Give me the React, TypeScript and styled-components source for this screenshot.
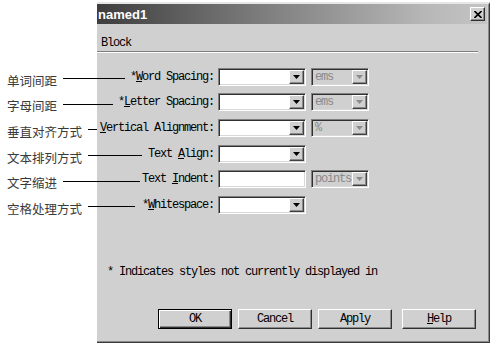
import styled, { createGlobalStyle } from 'styled-components';

const GlobalStyle = createGlobalStyle`
    html, body {
        margin: 0;
        padding: 0;
        background: #ffffff;
    }
    body {
        width: 497px;
        height: 347px;
        overflow: hidden;
    }
`

const mono = `"Liberation Mono", "DejaVu Sans Mono", monospace`;

interface FieldRow {
    label: string;
    key: string;
    star: boolean;
    kind: 'select' | 'input';
    unit?: string;
}

const rows: FieldRow[] = [
    { label: 'ord Spacing:', key: 'W', star: true, kind: 'select', unit: 'ems' },
    { label: 'etter Spacing:', key: 'L', star: true, kind: 'select', unit: 'ems' },
    { label: 'ertical Alignment:', key: 'V', star: false, kind: 'select', unit: '%' },
    { label: 'Text |lign:', key: 'A', star: false, kind: 'select' },
    { label: 'Text |ndent:', key: 'I', star: false, kind: 'input', unit: 'points' },
    { label: 'hitespace:', key: 'W', star: true, kind: 'select' },
];

const callouts = [
    { text: '单词间距', reach: 118 },
    { text: '字母间距', reach: 106 },
    { text: '垂直对齐方式', reach: 90 },
    { text: '文本排列方式', reach: 135 },
    { text: '文字缩进', reach: 133 },
    { text: '空格处理方式', reach: 128 },
];

function Label({ row }: { row: FieldRow }) {
    // "|" marks where the access key sits inside the label
    const parts = row.label.split('|');
    return (
        <FieldLabel>
            {row.star && '*'}
            {parts.length > 1 ? parts[0] : null}
            <u>{row.key}</u>
            {parts.length > 1 ? parts[1] : parts[0]}
        </FieldLabel>
    );
}

function Arrow({ disabled }: { disabled?: boolean }) {
    return (
        <DropButton>
            <svg width="7" height="4" viewBox="0 0 7 4">
                <path d="M0 0 H7 L3.5 4 Z" fill={disabled ? '#8a8a8a' : '#000'} />
            </svg>
        </DropButton>
    );
}

function App() {
    return (
        <>
            <GlobalStyle />
            <Page>
                <Dialog>
                    <TitleBar>
                        <TitleText>named1</TitleText>
                        <CloseButton>
                            <svg width="8" height="7" viewBox="0 0 8 7">
                                <path d="M0.5 0 L7.5 7 M7.5 0 L0.5 7" stroke="#000" strokeWidth="1.6" />
                            </svg>
                        </CloseButton>
                    </TitleBar>
                    <Category>Block</Category>
                    <Separator />
                    <FormGrid>
                        {rows.map((row, i) => (
                            <FormRow key={i}>
                                <Label row={row} />
                                {row.kind === 'select' ? (
                                    <Field $width={88}>
                                        <Arrow />
                                    </Field>
                                ) : (
                                    <Field $width={88} />
                                )}
                                {row.unit ? (
                                    <Field $width={58} $disabled>
                                        <UnitText>{row.unit}</UnitText>
                                        <Arrow disabled />
                                    </Field>
                                ) : <span />}
                            </FormRow>
                        ))}
                    </FormGrid>
                    <Note>* Indicates styles not currently displayed in</Note>
                    <ButtonRow>
                        <Button $default>OK</Button>
                        <Button>Cancel</Button>
                        <Button>Apply</Button>
                        <Button $extra={4}><u>H</u>elp</Button>
                    </ButtonRow>
                </Dialog>
                <Callouts>
                    {callouts.map((c, i) => (
                        <Callout key={i} $reach={c.reach}>
                            <CalloutText>{c.text}</CalloutText>
                            <CalloutLine />
                        </Callout>
                    ))}
                </Callouts>
            </Page>
        </>
    )
}

const Page = styled.div`
    position: relative;
    width: 497px;
    height: 347px;
    box-sizing: border-box;
    padding: 2px 0 0 97px;
`

const Dialog = styled.div`
    width: 393px;
    height: 341px;
    box-sizing: border-box;
    background: #d0d0d0;
    border-top: 2px solid #e6e6e6;
    border-right: 1px solid #3c3c3c;
    border-bottom: 1px solid #3c3c3c;
    box-shadow: inset -1px -1px 0 #8a8a8a;
    padding-right: 2px;
    display: flex;
    flex-direction: column;
`

const TitleBar = styled.div`
    height: 20px;
    display: flex;
    align-items: center;
    justify-content: space-between;
    background: linear-gradient(to right, #3e3e3e 0%, #7a7a7a 40%, #b8b8b8 85%, #c4c4c4 100%);
    padding-right: 2px;
`

const TitleText = styled.span`
    color: #ffffff;
    font-family: "Liberation Sans", Arial, sans-serif;
    font-weight: bold;
    font-size: 13px;
    padding-left: 1px;
`

const CloseButton = styled.div`
    width: 15px;
    height: 14px;
    box-sizing: border-box;
    background: #d0d0d0;
    border-top: 1px solid #ffffff;
    border-left: 1px solid #ffffff;
    border-right: 1px solid #303030;
    border-bottom: 1px solid #303030;
    box-shadow: inset -1px -1px 0 #8a8a8a;
    display: flex;
    align-items: center;
    justify-content: center;
`

const Category = styled.div`
    font-family: ${mono};
    font-size: 12px;
    letter-spacing: -1.2px;
    line-height: 14px;
    margin: 12px 0 0 4px;
    color: #000;
`

const Separator = styled.div`
    height: 0;
    margin: 1px 9px 0 0;
    border-top: 1px solid #808080;
    border-bottom: 1px solid #ffffff;
`

const FormGrid = styled.div`
    display: flex;
    flex-direction: column;
    margin-top: 11px;
`

const FormRow = styled.div`
    height: 25.6px;
    display: grid;
    grid-template-columns: 116px 88px 58px;
    column-gap: 5px;
    align-items: center;
`

const FieldLabel = styled.span`
    font-family: ${mono};
    font-size: 12px;
    letter-spacing: -1.2px;
    text-align: right;
    color: #000;
    white-space: nowrap;
    margin-right: -1px;

    u {
        text-underline-offset: 1px;
    }
`

const Field = styled.div<{ $width: number; $disabled?: boolean }>`
    width: ${p => p.$width}px;
    height: 18px;
    box-sizing: border-box;
    background: ${p => p.$disabled ? '#d0d0d0' : '#ffffff'};
    border-top: 1px solid #808080;
    border-left: 1px solid #808080;
    border-right: 1px solid #ffffff;
    border-bottom: 1px solid #ffffff;
    box-shadow: inset 1px 1px 0 #303030, inset -1px -1px 0 #d8d8d8;
    display: flex;
    align-items: center;
    justify-content: space-between;
    padding: 1px 1px 1px 2px;
`

const UnitText = styled.span`
    font-family: ${mono};
    font-size: 12px;
    letter-spacing: -1.2px;
    color: #8a8a8a;
    padding-left: 1px;
`

const DropButton = styled.div`
    width: 15px;
    height: 14px;
    margin-left: auto;
    box-sizing: border-box;
    background: #d0d0d0;
    border-top: 1px solid #ffffff;
    border-left: 1px solid #ffffff;
    border-right: 1px solid #404040;
    border-bottom: 1px solid #404040;
    box-shadow: inset -1px -1px 0 #8a8a8a;
    display: flex;
    align-items: center;
    justify-content: center;
`

const Note = styled.div`
    font-family: ${mono};
    font-size: 12px;
    letter-spacing: -1.2px;
    line-height: 14px;
    margin: 47px 0 0 10px;
    color: #000;
`

const ButtonRow = styled.div`
    display: flex;
    gap: 6px;
    margin: 30px 0 0 61px;
`

const Button = styled.div<{ $default?: boolean; $extra?: number }>`
    width: 74px;
    height: 20px;
    box-sizing: border-box;
    margin-left: ${p => p.$extra || 0}px;
    background: #d0d0d0;
    ${p => p.$default ? `
        border: 1px solid #000;
        box-shadow: inset 1px 1px 0 #ffffff, inset -1px -1px 0 #303030, inset -2px -2px 0 #8a8a8a;
    ` : `
        border-top: 1px solid #ffffff;
        border-left: 1px solid #ffffff;
        border-right: 1px solid #303030;
        border-bottom: 1px solid #303030;
        box-shadow: inset -1px -1px 0 #8a8a8a;
    `}
    display: flex;
    align-items: center;
    justify-content: center;
    font-family: ${mono};
    font-size: 12px;
    letter-spacing: -1.2px;
    color: #000;
`

const Callouts = styled.div`
    position: absolute;
    left: 7px;
    top: 66px;
    display: flex;
    flex-direction: column;
`

const Callout = styled.div<{ $reach: number }>`
    width: ${p => p.$reach}px;
    height: 25.6px;
    display: flex;
    align-items: center;
`

const CalloutText = styled.span`
    font-family: "Noto Sans CJK SC", "Noto Sans", sans-serif;
    font-size: 12.5px;
    color: #3a3a3a;
    white-space: nowrap;
    padding-top: 3px;
`

const CalloutLine = styled.div`
    flex: 1;
    height: 1px;
    margin-left: 6px;
    background: #000;
`

export default App;
